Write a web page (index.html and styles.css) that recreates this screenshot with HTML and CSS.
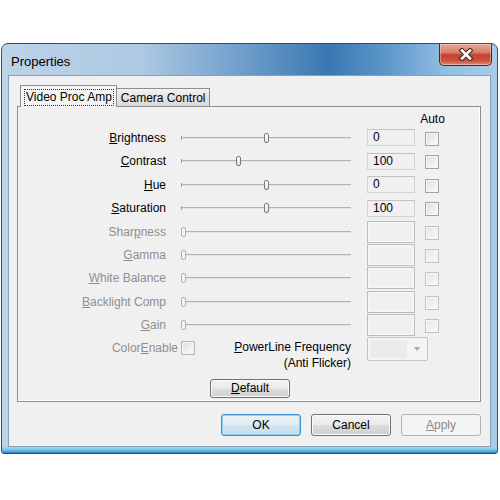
FILE: index.html
```html
<!DOCTYPE html>
<html lang="en">
<head>
    <meta charset="UTF-8">
    <title>Properties</title>
    <link rel="stylesheet" href="styles.css">
</head>
<body>
    <div class="window">
        <div class="titlebar">
            <span class="title">Properties</span>
            <div class="close">
                <svg width="16" height="13" viewBox="0 0 16 13">
                    <path d="M4 2.5 L12 10.5 M12 2.5 L4 10.5" stroke="#4a2a2a" stroke-width="4.8" stroke-linecap="square" fill="none"/>
                    <path d="M4 2.5 L12 10.5 M12 2.5 L4 10.5" stroke="#ffffff" stroke-width="2.6" stroke-linecap="square" fill="none"/>
                </svg>
            </div>
        </div>

        <div class="client">
            <div class="tabs">
                <div class="tab active"><span class="focus">Video Proc Amp</span></div>
                <div class="tab">Camera Control</div>
            </div>

            <div class="panel">
                <div class="prop head">
                    <span></span><span></span><span></span>
                    <span class="auto">Auto</span>
                </div>

                <div class="prop">
                    <label><u>B</u>rightness</label>
                    <div class="slider"><span class="thumb" style="left:83px"></span></div>
                    <div class="edit">0</div>
                    <div class="check"></div>
                </div>
                <div class="prop">
                    <label><u>C</u>ontrast</label>
                    <div class="slider"><span class="thumb" style="left:55px"></span></div>
                    <div class="edit">100</div>
                    <div class="check"></div>
                </div>
                <div class="prop">
                    <label><u>H</u>ue</label>
                    <div class="slider"><span class="thumb" style="left:83px"></span></div>
                    <div class="edit">0</div>
                    <div class="check"></div>
                </div>
                <div class="prop">
                    <label><u>S</u>aturation</label>
                    <div class="slider"><span class="thumb" style="left:83px"></span></div>
                    <div class="edit">100</div>
                    <div class="check"></div>
                </div>

                <div class="prop disabled">
                    <label>Shar<u>p</u>ness</label>
                    <div class="slider"><span class="thumb" style="left:0px"></span></div>
                    <div class="edit"></div>
                    <div class="check"></div>
                </div>
                <div class="prop disabled">
                    <label><u>G</u>amma</label>
                    <div class="slider"><span class="thumb" style="left:0px"></span></div>
                    <div class="edit"></div>
                    <div class="check"></div>
                </div>
                <div class="prop disabled">
                    <label><u>W</u>hite Balance</label>
                    <div class="slider"><span class="thumb" style="left:0px"></span></div>
                    <div class="edit"></div>
                    <div class="check"></div>
                </div>
                <div class="prop disabled">
                    <label><u>B</u>acklight Comp</label>
                    <div class="slider"><span class="thumb" style="left:0px"></span></div>
                    <div class="edit"></div>
                    <div class="check"></div>
                </div>
                <div class="prop disabled">
                    <label><u>G</u>ain</label>
                    <div class="slider"><span class="thumb" style="left:0px"></span></div>
                    <div class="edit"></div>
                    <div class="check"></div>
                </div>

                <div class="extra">
                    <div class="color-enable">
                        <span>Color<u>E</u>nable</span>
                        <div class="check"></div>
                    </div>
                    <div class="powerline"><u>P</u>owerLine Frequency<br>(Anti Flicker)</div>
                    <div class="combo">
                        <span class="combo-field"></span>
                        <span class="combo-arrow"></span>
                    </div>
                </div>

                <div class="default-row">
                    <button class="btn">
                        <u>D</u>efault
                    </button>
                </div>
            </div>

            <div class="buttons">
                <button class="btn ok">OK</button>
                <button class="btn">Cancel</button>
                <button class="btn off"><u>A</u>pply</button>
            </div>
        </div>
    </div>
</body>
</html>
```

FILE: styles.css
```css
body {
    margin: 0;
    background: #ffffff;
    font-family: "Liberation Sans", Arial, sans-serif;
    font-size: 12px;
    color: #000000;
}

.window {
    box-sizing: border-box;
    width: 497px;
    height: 411px;
    margin: 43px 0 0 1px;
    padding: 0 6px 6px;
    border: 1px solid #3c4d5e;
    border-radius: 7px 7px 3px 3px;
    display: flex;
    flex-direction: column;
    background:
        linear-gradient(to top, #2f7fb8 0, #5ab6e6 2px, #86cdee 4px, #a9d3ee 6px, transparent 6px),
        linear-gradient(90deg, #bcd3e8 0%, #adc9e3 28%, #6a9bc9 50%, #3a78b2 66%, #5e98cb 78%, #93bfe2 90%, #a9cce9 100%);
}

.titlebar {
    height: 31px;
    display: flex;
    justify-content: space-between;
    align-items: flex-start;
}

.title {
    font-size: 13px;
    margin: 10px 0 0 3px;
    color: #000000;
}

.close {
    box-sizing: border-box;
    width: 53px;
    height: 22px;
    margin: 0 -1px 0 0;
    border: 1px solid #5a2219;
    border-top: none;
    border-radius: 0 0 5px 5px;
    background: linear-gradient(#e7a697 0%, #d77d6b 40%, #c4432d 52%, #cb523d 80%, #e08b76 100%);
    box-shadow: inset 0 0 0 1px rgba(255, 255, 255, 0.35);
    display: flex;
    align-items: center;
    justify-content: center;
}

.close svg {
    display: block;
}

.client {
    flex: 1;
    background: #f0f0f0;
    border: 1px solid #8b9fb2;
    padding: 9px 9px 0 8px;
}

/* tab strip */
.tabs {
    display: flex;
    align-items: flex-end;
    height: 22px;
    padding-left: 3px;
    position: relative;
    z-index: 1;
}

.tab {
    box-sizing: border-box;
    height: 18px;
    margin-bottom: 1px;
    padding: 0 3px 0 4px;
    border: 1px solid #8c8e94;
    border-bottom: none;
    border-left: none;
    background: linear-gradient(#f2f2f2, #e3e3e3 50%, #d9d9d9);
    line-height: 18px;
    white-space: nowrap;
}

.tab.active {
    height: 22px;
    margin-bottom: 0;
    padding: 3px 3px 0 4px;
    border-left: 1px solid #8c8e94;
    background: #f4f4f4;
    line-height: 16px;
}

.focus {
    display: inline-block;
    padding: 0 1px;
    outline: 1px dotted #333333;
    outline-offset: 0;
    line-height: 15px;
}

.panel {
    box-sizing: border-box;
    width: 464px;
    height: 296px;
    margin-top: -1px;
    border: 1px solid #8c8e94;
    background: #f0f0f0;
    box-shadow: inset -1px -1px 0 #ffffff;
}

/* property rows */
.prop {
    display: grid;
    grid-template-columns: 163px 186px 58px 14px;
    height: 23.4px;
    align-items: center;
}

.prop.head {
    box-sizing: border-box;
    height: 19.3px;
    padding-top: 5px;
    align-items: start;
    line-height: 14px;
}

.auto {
    justify-self: center;
    white-space: nowrap;
    margin-left: 1px;
}

.prop label {
    text-align: right;
    padding-right: 15px;
    white-space: nowrap;
}

.slider {
    position: relative;
    width: 170px;
    height: 14px;
}

.slider::before {
    content: "";
    position: absolute;
    left: 1px;
    right: 0;
    top: 6px;
    height: 1px;
    background: #b3b3b3;
    border-bottom: 1px solid #e3e3e3;
}

.slider::after {
    content: "";
    position: absolute;
    left: 0;
    top: 5px;
    width: 1px;
    height: 4px;
    background: #9a9a9a;
}

.thumb {
    box-sizing: border-box;
    position: absolute;
    top: 2px;
    width: 5px;
    height: 10px;
    border: 1px solid #7b7b7b;
    border-radius: 2px;
    background: linear-gradient(#ffffff, #e2e2e2);
    z-index: 1;
}

.edit {
    box-sizing: border-box;
    width: 48px;
    height: 17px;
    padding-left: 5px;
    border: 1px solid #d2d2d2;
    border-top-color: #c2c2c2;
    background: #f0f0f0;
    line-height: 15px;
}

.check {
    box-sizing: border-box;
    width: 14px;
    height: 14px;
    margin-top: 2px;
    border: 1px solid #a3a3a3;
    background: linear-gradient(135deg, #dedede, #fbfbfb);
    box-shadow: inset 0 0 0 1px #f6f6f6;
}

.disabled label {
    color: #8f8f8f;
}

.disabled .thumb {
    border-color: #b0b0b0;
    background: #f4f4f4;
}

.disabled .slider::after {
    background: #c0c0c0;
}

.disabled .edit {
    height: 22px;
    border: 1px solid #bdbdbd;
    box-shadow: inset 0 0 0 1px #f7f7f7;
}

.disabled .check {
    border-color: #c2c2c2;
    background: linear-gradient(135deg, #e6e6e6, #f9f9f9);
}

/* colour enable / powerline line */
.extra {
    display: flex;
    align-items: flex-start;
    height: 36px;
    margin-top: 0.5px;
}

.color-enable {
    width: 177px;
    display: flex;
    justify-content: flex-end;
    align-items: center;
    gap: 3px;
    margin-top: 4px;
    color: #8f8f8f;
}

.color-enable .check {
    margin-top: 0;
    border-color: #b4b4b4;
}

.powerline {
    width: 156px;
    margin-top: 2px;
    text-align: right;
    line-height: 16px;
    white-space: nowrap;
}

.combo {
    box-sizing: border-box;
    display: flex;
    width: 61px;
    height: 24px;
    margin-left: 16px;
    padding: 2px;
    border: 1px solid #c4c4c4;
    border-radius: 2px;
    background: #f4f4f4;
}

.combo-field {
    width: 37px;
    background: #ebebeb;
}

.combo-arrow {
    flex: 1;
    position: relative;
}

.combo-arrow::after {
    content: "";
    position: absolute;
    left: 7px;
    top: 7px;
    border-left: 3px solid transparent;
    border-right: 3px solid transparent;
    border-top: 4px solid #a8a8a8;
}

.default-row {
    display: flex;
    padding-left: 192px;
    margin-top: 6px;
}

/* push buttons */
.btn {
    box-sizing: border-box;
    width: 80px;
    height: 22px;
    padding: 0;
    border: 1px solid #707070;
    border-radius: 3px;
    background: linear-gradient(#f2f2f2 0%, #ebebeb 48%, #dddddd 52%, #cfcfcf 100%);
    box-shadow: inset 0 0 0 1px #fbfbfb;
    font-family: "Liberation Sans", Arial, sans-serif;
    font-size: 12px;
    color: #000000;
}

.default-row .btn {
    height: 19px;
    line-height: 15px;
}

.buttons {
    display: flex;
    justify-content: flex-end;
    gap: 10px;
    margin-top: 12px;
    padding-right: 0;
}

.btn.ok {
    border-color: #3c8fd0;
    background: linear-gradient(#eaf3f9 0%, #e0ecf5 48%, #d3e4f0 52%, #c9dde9 100%);
    box-shadow: inset 0 0 0 1px #8fd0f3;
}

.btn.off {
    border-color: #b0b4b7;
    background: #f4f4f4;
    box-shadow: none;
    color: #8a8a8a;
}
```
